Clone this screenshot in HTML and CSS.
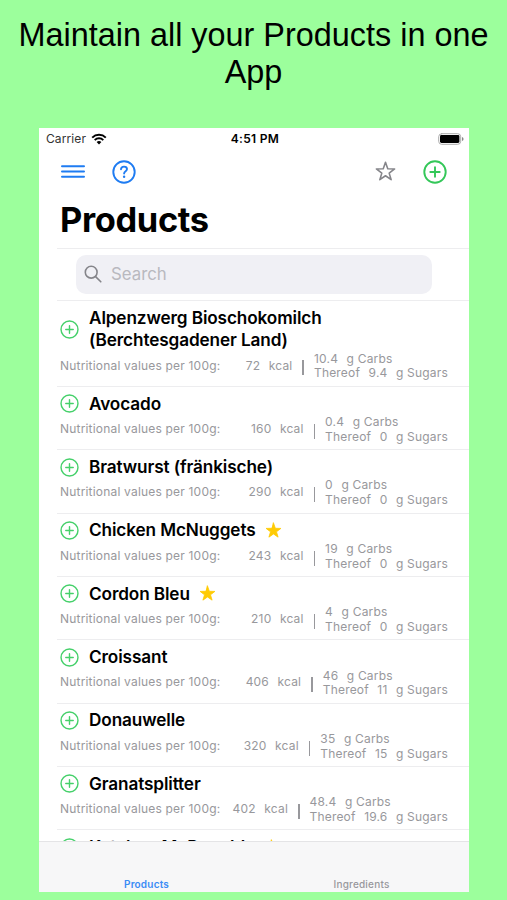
FILE: index.html
```html
<!DOCTYPE html>
<html lang="en">
  <head>
    <meta charset="UTF-8" />
    <meta name="viewport" content="width=device-width, initial-scale=1.0" />
    <title>Products</title>
    <link rel="stylesheet" href="styles.css">
  </head>
  <body>
    <svg class="sprite" aria-hidden="true">
      <symbol id="icon-plus" viewBox="0 0 24 24">
        <circle cx="12" cy="12" r="10.7" />
        <path d="M12 7.3v9.4M7.3 12h9.4" />
      </symbol>
      <symbol id="icon-star" viewBox="0 0 20 20">
        <path d="M10 1.2l2.15 6.2 6.55.15-5.2 3.98 1.9 6.27L10 14.05 4.6 17.8l1.9-6.27L1.3 7.55l6.55-.15z" />
      </symbol>
    </svg>

    <h1 class="headline">Maintain all your Products in one App</h1>

    <div class="phone">
      <div class="status-bar">
        <div class="carrier">
          <span>Carrier</span>
          <svg class="wifi" viewBox="0 0 16 12">
            <path d="M1.2 4.6a9.8 9.8 0 0 1 13.6 0M3.7 7.1a6.2 6.2 0 0 1 8.6 0" />
            <path class="wifi-dot" d="M8 11.5L5.6 9.1a3.4 3.4 0 0 1 4.8 0z" />
          </svg>
        </div>
        <div class="clock">4:51 PM</div>
        <div class="battery-wrap">
          <svg class="battery" viewBox="0 0 26 12">
            <rect class="battery-shell" x="0.7" y="0.7" width="22" height="10.6" rx="3" />
            <rect x="2" y="2" width="19.4" height="8" rx="1.4" />
            <path class="battery-tip" d="M24 4v4q1.6-.6 1.6-2T24 4z" />
          </svg>
        </div>
      </div>

      <div class="nav-bar">
        <svg class="icon-menu" viewBox="0 0 24 16"><path d="M1 2.2h22M1 7.5h22M1 12.8h22" /></svg>
        <svg class="icon-help" viewBox="0 0 24 24">
          <circle cx="12" cy="12" r="10.7" />
          <path d="M9 9.3c.1-1.7 1.3-2.7 3-2.7s3 1 3 2.5c0 2.2-2.9 2.1-2.9 4.5" />
          <circle class="dot" cx="12.1" cy="16.7" r="1.2" />
        </svg>
        <svg class="icon-favorites"><use href="#icon-star" /></svg>
        <svg class="icon-new"><use href="#icon-plus" /></svg>
      </div>

      <h2 class="page-title">Products</h2>

      <div class="search-row">
        <div class="search">
          <svg viewBox="0 0 18 18"><circle cx="7.2" cy="7.2" r="5.9" /><path d="M11.6 11.6l5.2 5.2" /></svg>
          <span>Search</span>
        </div>
      </div>

      <div class="product-list">
        <div class="product">
          <div class="product-name"><svg class="add"><use href="#icon-plus" /></svg><span>Alpenzwerg Bioschokomilch<br>(Berchtesgadener Land)</span></div>
          <div class="values">
            <span class="per">Nutritional values per 100g:</span>
            <span class="num">72</span><span>kcal</span><i class="bar"></i>
            <div class="carbs"><div><b>10.4</b>g Carbs</div><div>Thereof<b class="mid">9.4</b>g Sugars</div></div>
          </div>
        </div>

        <div class="product">
          <div class="product-name"><svg class="add"><use href="#icon-plus" /></svg><span>Avocado</span></div>
          <div class="values">
            <span class="per">Nutritional values per 100g:</span>
            <span class="num">160</span><span>kcal</span><i class="bar"></i>
            <div class="carbs"><div><b>0.4</b>g Carbs</div><div>Thereof<b class="mid">0</b>g Sugars</div></div>
          </div>
        </div>

        <div class="product">
          <div class="product-name"><svg class="add"><use href="#icon-plus" /></svg><span>Bratwurst (fränkische)</span></div>
          <div class="values">
            <span class="per">Nutritional values per 100g:</span>
            <span class="num">290</span><span>kcal</span><i class="bar"></i>
            <div class="carbs"><div><b>0</b>g Carbs</div><div>Thereof<b class="mid">0</b>g Sugars</div></div>
          </div>
        </div>

        <div class="product">
          <div class="product-name"><svg class="add"><use href="#icon-plus" /></svg><span>Chicken McNuggets</span><svg class="fav"><use href="#icon-star" /></svg></div>
          <div class="values">
            <span class="per">Nutritional values per 100g:</span>
            <span class="num">243</span><span>kcal</span><i class="bar"></i>
            <div class="carbs"><div><b>19</b>g Carbs</div><div>Thereof<b class="mid">0</b>g Sugars</div></div>
          </div>
        </div>

        <div class="product">
          <div class="product-name"><svg class="add"><use href="#icon-plus" /></svg><span>Cordon Bleu</span><svg class="fav"><use href="#icon-star" /></svg></div>
          <div class="values">
            <span class="per">Nutritional values per 100g:</span>
            <span class="num">210</span><span>kcal</span><i class="bar"></i>
            <div class="carbs"><div><b>4</b>g Carbs</div><div>Thereof<b class="mid">0</b>g Sugars</div></div>
          </div>
        </div>

        <div class="product">
          <div class="product-name"><svg class="add"><use href="#icon-plus" /></svg><span>Croissant</span></div>
          <div class="values">
            <span class="per">Nutritional values per 100g:</span>
            <span class="num">406</span><span>kcal</span><i class="bar"></i>
            <div class="carbs"><div><b>46</b>g Carbs</div><div>Thereof<b class="mid">11</b>g Sugars</div></div>
          </div>
        </div>

        <div class="product">
          <div class="product-name"><svg class="add"><use href="#icon-plus" /></svg><span>Donauwelle</span></div>
          <div class="values">
            <span class="per">Nutritional values per 100g:</span>
            <span class="num">320</span><span>kcal</span><i class="bar"></i>
            <div class="carbs"><div><b>35</b>g Carbs</div><div>Thereof<b class="mid">15</b>g Sugars</div></div>
          </div>
        </div>

        <div class="product">
          <div class="product-name"><svg class="add"><use href="#icon-plus" /></svg><span>Granatsplitter</span></div>
          <div class="values">
            <span class="per">Nutritional values per 100g:</span>
            <span class="num">402</span><span>kcal</span><i class="bar"></i>
            <div class="carbs"><div><b>48.4</b>g Carbs</div><div>Thereof<b class="mid">19.6</b>g Sugars</div></div>
          </div>
        </div>

        <div class="product">
          <div class="product-name"><svg class="add"><use href="#icon-plus" /></svg><span>Ketchup McDonalds</span><svg class="fav"><use href="#icon-star" /></svg></div>
        </div>
      </div>

      <div class="tab-bar">
        <div class="tab active">Products</div>
        <div class="tab">Ingredients</div>
      </div>
    </div>
  </body>
</html>
```

FILE: styles.css
```css
* {
  margin: 0;
  padding: 0;
  box-sizing: border-box;
}

body {
  height: 900px;
  overflow: hidden;
  background: #9cff9c;
  font-family: Inter, "Liberation Sans", sans-serif;
  color: #000;
}

svg {
  display: block;
  flex: none;
  fill: none;
  stroke-linecap: round;
  stroke-linejoin: round;
}

.sprite {
  width: 0;
  height: 0;
  position: absolute;
}

.headline {
  height: 127.5px;
  padding: 17px 10px 0;
  text-align: center;
  font-family: "Liberation Sans", Arial, sans-serif;
  font-size: 32.4px;
  font-weight: 400;
  line-height: 37px;
}

.phone {
  width: 430px;
  height: 764px;
  margin-left: 39px;
  background: #fff;
  display: flex;
  flex-direction: column;
  overflow: hidden;
}

/* status bar */
.status-bar {
  flex: none;
  height: 22px;
  padding: 0 5px 0 7px;
  display: flex;
  align-items: center;
  font-size: 12px;
}

.carrier,
.battery-wrap {
  flex: 1;
  display: flex;
  align-items: center;
}

.carrier {
  gap: 5px;
  color: #333;
  letter-spacing: 0.1px;
}

.wifi {
  width: 16px;
  height: 12px;
  stroke: #000;
  stroke-width: 2;
  stroke-linecap: butt;
}

.wifi-dot {
  fill: #000;
  stroke: none;
}

.clock {
  font-weight: 600;
  letter-spacing: 0.3px;
}

.battery-wrap {
  justify-content: flex-end;
}

.battery {
  width: 26px;
  height: 12px;
  fill: #000;
}

.battery-shell {
  fill: none;
  stroke: #aaa;
}

.battery-tip {
  fill: #888;
}

/* navigation */
.nav-bar {
  flex: none;
  height: 44px;
  padding: 0 22px;
  display: flex;
  align-items: center;
}

.icon-menu {
  width: 24px;
  height: 16px;
  stroke: #1f7cf2;
  stroke-width: 2;
}

.icon-help {
  width: 24px;
  height: 24px;
  margin-left: 27px;
  stroke: #1f7cf2;
  stroke-width: 1.9;
}

.icon-help .dot {
  fill: #1f7cf2;
  stroke: none;
}

.icon-favorites {
  width: 21px;
  height: 21px;
  margin-left: auto;
  stroke: #85858a;
  stroke-width: 1.5;
}

.icon-new {
  width: 24px;
  height: 24px;
  margin-left: 27px;
  stroke: #34c759;
  stroke-width: 1.9;
}

.page-title {
  flex: none;
  height: 54px;
  padding-left: 21px;
  font-size: 34.4px;
  font-weight: 700;
  line-height: 51px;
  letter-spacing: -0.35px;
}

/* search */
.search-row {
  flex: none;
  height: 52.5px;
  margin-left: 18px;
  padding: 6px 37px 0 19px;
  border-top: 1px solid #ededef;
}

.search {
  height: 39px;
  padding-left: 8px;
  display: flex;
  align-items: center;
  gap: 9px;
  border-radius: 10px;
  background: #f0f0f5;
  color: #b9b9bf;
  font-size: 16.8px;
}

.search svg {
  width: 18px;
  height: 18px;
  stroke: #85858a;
  stroke-width: 1.6;
}

/* products */
.product-list {
  flex: 1;
  min-height: 0;
  margin-left: 18px;
  overflow: hidden;
}

.product {
  padding: 5.5px 21px 0 3px;
  border-top: 1px solid #ededef;
}

.product-name {
  display: flex;
  align-items: center;
  font-size: 17.2px;
  font-weight: 600;
  line-height: 22.7px;
  letter-spacing: -0.12px;
}

.add {
  width: 19px;
  height: 19px;
  margin-right: 10px;
  stroke: #45d06a;
  stroke-width: 1.8;
}

.fav {
  width: 17px;
  height: 17px;
  margin-left: 9px;
  fill: #ffcb05;
  stroke: #ffcb05;
}

.values {
  height: 34.15px;
  padding-bottom: 6px;
  display: flex;
  align-items: center;
  color: #98989c;
  font-size: 12px;
  line-height: 14.7px;
  letter-spacing: 0.19px;
  white-space: nowrap;
}

.num {
  margin-left: auto;
  margin-right: 8.5px;
}

.bar {
  width: 1.5px;
  height: 15px;
  margin: 4px 10px 0 10px;
  background: #98989c;
}

.carbs {
  padding-top: 1px;
}

.carbs b {
  margin-right: 8.5px;
  font-weight: 400;
}

.carbs .mid {
  margin-left: 8.5px;
}

/* tabs */
.tab-bar {
  flex: none;
  height: 51px;
  display: flex;
  align-items: flex-end;
  border-top: 1px solid #e4e4e6;
  background: #f7f7f8;
}

.tab {
  flex: 1;
  text-align: center;
  color: #98989c;
  font-size: 10px;
  font-weight: 500;
  line-height: 16px;
  letter-spacing: 0.2px;
}

.tab.active {
  color: #3a8cf5;
  font-weight: 600;
}
```
